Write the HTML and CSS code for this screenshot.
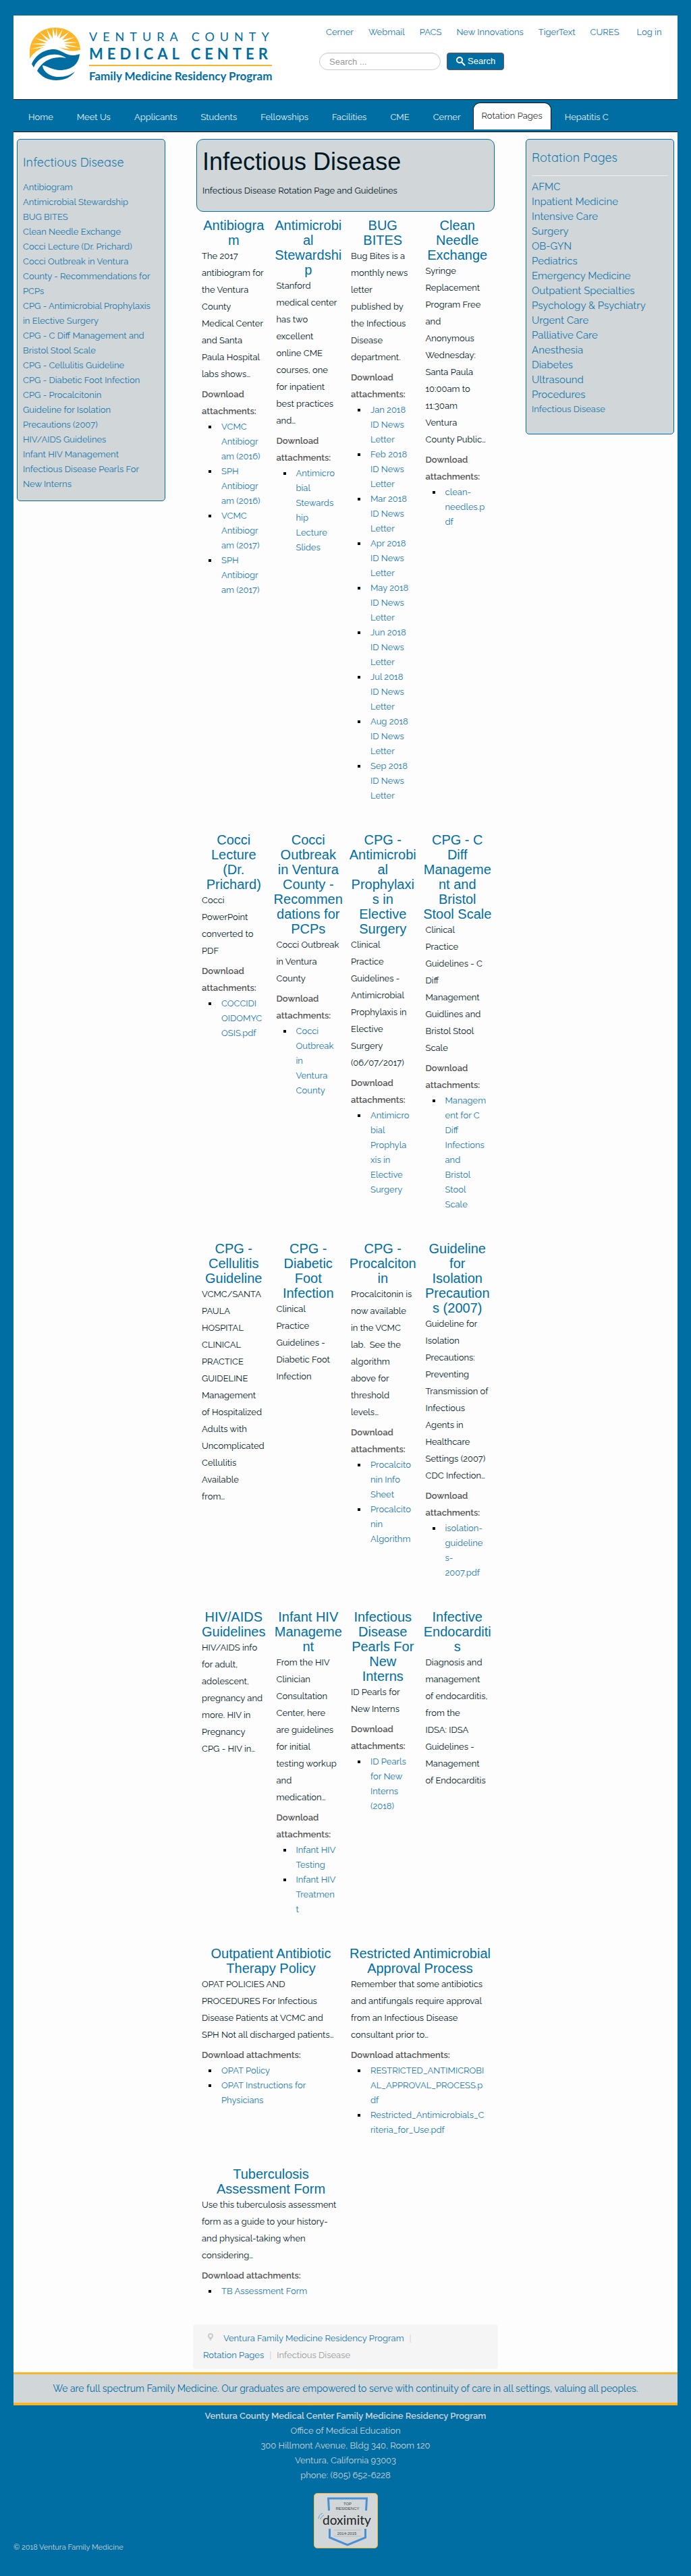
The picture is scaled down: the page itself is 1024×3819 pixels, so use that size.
FILE: index.html
```html
<!DOCTYPE html>
<html lang="en">
<head>
<meta charset="utf-8">
<meta name="viewport" content="width=device-width, initial-scale=1">
<title>Infectious Disease - Ventura Family Medicine</title>
<link rel="stylesheet" href="styles.css">
</head>
<body>
<div class="page">
  <header class="header">
    <a class="logo" href="#" aria-label="Ventura County Medical Center Family Medicine Residency Program">
      <svg class="logo-mark" width="76" height="80" viewBox="0 0 76 80" aria-hidden="true">
        <path fill="#fdb525" d="M0 47C-3 18 14 1 38 1C61 1 75 17 75 34C69 38 62 40 55 37C44 32 35 28 23 31C12 34 5 39 0 47Z"/>
        <path fill="#fff" d="M38 14L40 1L41 15L49 3L44 17L59 7L48 19L67 15L50 22L72 23L51 25L76 31L52 28L60 33L40 30L22 30L0 33L24 27L2 25L25 24L7 16L27 21L15 8L30 19L25 3L34 17L34 1Z"/>
        <path fill="#fff" d="M0 48C7 35 21 27 34 28C48 30 55 39 74 34V39C56 43 44 31 29 34C16 37 8 44 2 54Z"/>
        <path fill="#006ea3" d="M3 55C8 43 20 33 36 33C50 34 56 47 74 40C73 55 62 64 45 64C34 64 27 58 19 57C20 67 31 74 43 74C53 74 61 71 67 66C61 75 51 79 39 79C27 79 18 74 11 65C18 52 32 42 54 46C46 40 32 39 22 44C13 48 9 53 6 60Z"/>
      </svg>
      <svg class="logo-text" width="300" height="90" viewBox="0 0 300 90" aria-hidden="true">
        <g fill="#006ea3" font-family="Lato, sans-serif">
          <text x="0" y="21" font-size="18" letter-spacing="8">VENTURA COUNTY</text>
          <text x="0" y="48" font-size="22" font-weight="700" letter-spacing="6">MEDICAL CENTER</text>
          <text x="0" y="79" font-size="17" font-weight="700">Family Medicine Residency Program</text>
        </g>
        <path d="M0 57H271" stroke="#fdb525" stroke-width="2"/>
      </svg>
    </a>
    <div class="header-tools">
      <nav class="quick-links" aria-label="Quick links">
        <a href="#">Cerner</a><a href="#">Webmail</a><a href="#">PACS</a><a href="#">New Innovations</a><a href="#">TigerText</a><a href="#">CURES</a><a class="login" href="#">Log in</a>
      </nav>
      <form class="search">
        <input type="search" placeholder="Search ..." aria-label="Search">
        <button type="submit">
          <svg width="14" height="14" viewBox="0 0 14 14" aria-hidden="true"><circle cx="5" cy="5" r="4" fill="none" stroke="#fff" stroke-width="2"/><path d="M8 8L13 13" stroke="#fff" stroke-width="2"/></svg>
          Search
        </button>
      </form>
    </div>
  </header>

  <nav class="main-nav" aria-label="Main">
    <a href="#">Home</a><a href="#">Meet Us</a><a href="#">Applicants</a><a href="#">Students</a><a href="#">Fellowships</a><a href="#">Facilities</a><a href="#">CME</a><a href="#">Cerner</a><a class="active" href="#" aria-current="page">Rotation Pages</a><a href="#">Hepatitis C</a>
  </nav>

  <div class="columns">
    <aside class="panel topics">
      <h3>Infectious Disease</h3>
      <ul>
        <li><a href="#">Antibiogram</a></li>
        <li><a href="#">Antimicrobial Stewardship</a></li>
        <li><a href="#">BUG BITES</a></li>
        <li><a href="#">Clean Needle Exchange</a></li>
        <li><a href="#">Cocci Lecture (Dr. Prichard)</a></li>
        <li><a href="#">Cocci Outbreak in Ventura County - Recommendations for PCPs</a></li>
        <li><a href="#">CPG - Antimicrobial Prophylaxis in Elective Surgery</a></li>
        <li><a href="#">CPG - C Diff Management and Bristol Stool Scale</a></li>
        <li><a href="#">CPG - Cellulitis Guideline</a></li>
        <li><a href="#">CPG - Diabetic Foot Infection</a></li>
        <li><a href="#">CPG - Procalcitonin</a></li>
        <li><a href="#">Guideline for Isolation Precautions (2007)</a></li>
        <li><a href="#">HIV/AIDS Guidelines</a></li>
        <li><a href="#">Infant HIV Management</a></li>
        <li><a href="#">Infectious Disease Pearls For New Interns</a></li>
      </ul>
    </aside>

    <main class="content">
      <section class="intro">
        <h1>Infectious Disease</h1>
        <p>Infectious Disease Rotation Page and Guidelines</p>
      </section>

      <div class="articles">
        <article>
          <h2><a href="#">Antibiogram</a></h2>
          <p>The 2017 antibiogram for the Ventura County<br>Medical Center and Santa<br>Paula Hospital labs shows…</p>
          <h4>Download attachments:</h4>
          <ul>
            <li><a href="#">VCMC Antibiogr<wbr>am (2016)</a></li>
            <li><a href="#">SPH Antibiogr<wbr>am (2016)</a></li>
            <li><a href="#">VCMC Antibiogr<wbr>am (2017)</a></li>
            <li><a href="#">SPH Antibiogr<wbr>am (2017)</a></li>
          </ul>
        </article>
        <article>
          <h2><a href="#">Antimicrobial Stewardship</a></h2>
          <p>Stanford medical center has two excellent online CME courses, one for inpatient best practices and…</p>
          <h4>Download attachments:</h4>
          <ul>
            <li><a href="#">Antimicro<wbr>bial Stewards<wbr>hip<br>Lecture Slides</a></li>
          </ul>
        </article>
        <article>
          <h2><a href="#">BUG<br>BITES</a></h2>
          <p>Bug Bites is a monthly news letter published by the Infectious Disease department.</p>
          <h4>Download attachments:</h4>
          <ul>
            <li><a href="#">Jan 2018 ID News Letter</a></li>
            <li><a href="#">Feb 2018 ID News Letter</a></li>
            <li><a href="#">Mar 2018 ID News Letter</a></li>
            <li><a href="#">Apr 2018 ID News Letter</a></li>
            <li><a href="#">May 2018 ID News Letter</a></li>
            <li><a href="#">Jun 2018 ID News Letter</a></li>
            <li><a href="#">Jul 2018<br>ID News Letter</a></li>
            <li><a href="#">Aug 2018 ID News Letter</a></li>
            <li><a href="#">Sep 2018 ID News Letter</a></li>
          </ul>
        </article>
        <article>
          <h2><a href="#">Clean Needle Exchange</a></h2>
          <p>Syringe Replacement Program Free and<br>Anonymous Wednesday: Santa Paula 10:00am to 11:30am<br>Ventura<br>County Public…</p>
          <h4>Download attachments:</h4>
          <ul>
            <li><a href="#">clean-needles.p<wbr>df</a></li>
          </ul>
        </article>

        <article>
          <h2><a href="#">Cocci Lecture (Dr. Prichard)</a></h2>
          <p>Cocci PowerPoint converted to PDF</p>
          <h4>Download attachments:</h4>
          <ul>
            <li><a href="#">COCCIDI<wbr>OIDOMYC<wbr>OSIS.pdf</a></li>
          </ul>
        </article>
        <article>
          <h2><a href="#">Cocci Outbreak in Ventura County - Recommendations for PCPs</a></h2>
          <p>Cocci Outbreak in Ventura County</p>
          <h4>Download attachments:</h4>
          <ul>
            <li><a href="#">Cocci Outbreak in<br>Ventura County</a></li>
          </ul>
        </article>
        <article>
          <h2><a href="#">CPG - Antimicrobial Prophylaxis in Elective Surgery</a></h2>
          <p>Clinical Practice Guidelines - Antimicrobial Prophylaxis in Elective Surgery (06/07/2017)</p>
          <h4>Download attachments:</h4>
          <ul>
            <li><a href="#">Antimicro<wbr>bial Prophyla<wbr>xis in Elective Surgery</a></li>
          </ul>
        </article>
        <article>
          <h2><a href="#">CPG - C Diff Management and Bristol Stool Scale</a></h2>
          <p>Clinical Practice Guidelines - C Diff Management Guidlines and Bristol Stool Scale</p>
          <h4>Download attachments:</h4>
          <ul>
            <li><a href="#">Managem<wbr>ent for C<br>Diff Infections and<br>Bristol Stool<br>Scale</a></li>
          </ul>
        </article>

        <article>
          <h2><a href="#">CPG - Cellulitis Guideline</a></h2>
          <p>VCMC/SANTA PAULA HOSPITAL CLINICAL PRACTICE GUIDELINE Management of Hospitalized Adults with Uncomplicated Cellulitis Available<br>from…</p>
        </article>
        <article>
          <h2><a href="#">CPG - Diabetic Foot Infection</a></h2>
          <p>Clinical Practice Guidelines - Diabetic Foot Infection</p>
        </article>
        <article>
          <h2><a href="#">CPG - Procalcitonin</a></h2>
          <p>Procalcitonin is now available in the VCMC lab.&nbsp; See the algorithm above for threshold levels…</p>
          <h4>Download attachments:</h4>
          <ul>
            <li><a href="#">Procalcito<wbr>nin Info Sheet</a></li>
            <li><a href="#">Procalcito<wbr>nin Algorithm</a></li>
          </ul>
        </article>
        <article>
          <h2><a href="#">Guideline for Isolation Precautions (2007)</a></h2>
          <p>Guideline for Isolation Precautions: Preventing Transmission of Infectious Agents in Healthcare Settings (2007) CDC Infection…</p>
          <h4>Download attachments:</h4>
          <ul>
            <li><a href="#">isolation-guideline<wbr>s-<wbr>2007.pdf</a></li>
          </ul>
        </article>

        <article>
          <h2><a href="#">HIV/AIDS Guidelines</a></h2>
          <p>HIV/AIDS info for adult, adolescent, pregnancy and more. HIV in Pregnancy<br>CPG - HIV in…</p>
        </article>
        <article>
          <h2><a href="#">Infant HIV Management</a></h2>
          <p>From the HIV Clinician Consultation Center, here are guidelines for initial<br>testing workup and<br>medication…</p>
          <h4>Download attachments:</h4>
          <ul>
            <li><a href="#">Infant HIV Testing</a></li>
            <li><a href="#">Infant HIV Treatmen<wbr>t</a></li>
          </ul>
        </article>
        <article>
          <h2><a href="#">Infectious Disease Pearls For New Interns</a></h2>
          <p>ID Pearls for New Interns</p>
          <h4>Download attachments:</h4>
          <ul>
            <li><a href="#">ID Pearls for New Interns (2018)</a></li>
          </ul>
        </article>
        <article>
          <h2><a href="#">Infective Endocarditis</a></h2>
          <p>Diagnosis and management of endocarditis, from the<br>IDSA: IDSA Guidelines - Management of Endocarditis</p>
        </article>

        <article class="wide">
          <h2><a href="#">Outpatient Antibiotic Therapy Policy</a></h2>
          <p>OPAT POLICIES AND PROCEDURES For Infectious Disease Patients at VCMC and SPH Not all discharged patients…</p>
          <h4>Download attachments:</h4>
          <ul>
            <li><a href="#">OPAT Policy</a></li>
            <li><a href="#">OPAT Instructions for Physicians</a></li>
          </ul>
        </article>
        <article class="wide">
          <h2><a href="#">Restricted Antimicrobial Approval Process</a></h2>
          <p>Remember that some antibiotics and antifungals require approval from an Infectious Disease consultant prior to…</p>
          <h4>Download attachments:</h4>
          <ul>
            <li><a href="#">RESTRICTED_ANTIMICROBI<wbr>AL_APPROVAL_PROCESS.p<wbr>df</a></li>
            <li><a href="#">Restricted_Antimicrobials_C<wbr>riteria_for_Use.pdf</a></li>
          </ul>
        </article>

        <article class="wide">
          <h2><a href="#">Tuberculosis Assessment Form</a></h2>
          <p>Use this tuberculosis assessment form as a guide to your history- and physical-taking when considering…</p>
          <h4>Download attachments:</h4>
          <ul>
            <li><a href="#">TB Assessment Form</a></li>
          </ul>
        </article>
      </div>

      <nav aria-label="Breadcrumb">
        <ol class="breadcrumb">
          <li class="pin"><svg width="10" height="12" viewBox="0 0 10 12" aria-hidden="true"><path fill="#ccc" fill-rule="evenodd" d="M5 0a4 4 0 0 1 4 4c0 3-3 4-4 8C4 8 1 7 1 4a4 4 0 0 1 4-4zm0 2a2 2 0 1 0 0 4a2 2 0 0 0 0-4z"/></svg></li>
          <li><a href="#">Ventura Family Medicine Residency Program</a><span class="divider">|</span></li>
          <li><a href="#">Rotation Pages</a><span class="divider">|</span></li>
          <li class="current">Infectious Disease</li>
        </ol>
      </nav>
    </main>

    <aside class="panel rotations">
      <h3>Rotation Pages</h3>
      <ul>
        <li><a href="#">AFMC</a></li>
        <li><a href="#">Inpatient Medicine</a></li>
        <li><a href="#">Intensive Care</a></li>
        <li><a href="#">Surgery</a></li>
        <li><a href="#">OB-GYN</a></li>
        <li><a href="#">Pediatrics</a></li>
        <li><a href="#">Emergency Medicine</a></li>
        <li><a href="#">Outpatient Specialties</a></li>
        <li><a href="#">Psychology &amp; Psychiatry</a></li>
        <li><a href="#">Urgent Care</a></li>
        <li><a href="#">Palliative Care</a></li>
        <li><a href="#">Anesthesia</a></li>
        <li><a href="#">Diabetes</a></li>
        <li><a href="#">Ultrasound</a></li>
        <li><a href="#">Procedures</a></li>
        <li class="current"><a href="#">Infectious Disease</a></li>
      </ul>
    </aside>
  </div>

  <p class="motto">We are full spectrum Family Medicine. Our graduates are empowered to serve with continuity of care in all settings, valuing all peoples.</p>

  <footer class="footer">
    <address>
      <strong>Ventura County Medical Center Family Medicine Residency Program</strong><br>
      Office of Medical Education<br>
      300 Hillmont Avenue, Bldg 340, Room 120<br>
      Ventura, California 93003<br>
      phone: (805) 652-6228
    </address>
    <div class="footer-bottom">
      <p class="copyright">© 2018 Ventura Family Medicine</p>
      <a class="badge" href="#" aria-label="Doximity top residency">
        <svg width="93" height="80" viewBox="0 0 93 80" aria-hidden="true">
          <g fill="none" stroke="#4b8fd3" stroke-width="3">
            <path d="M21.500 25L20.500 7H77.500L76.500 25"/>
            <path d="M22.500 52V65L49 76L75.500 65V52"/>
          </g>
          <g fill="none" stroke="#5a9ad8"><path d="M6 37C7 32 9 30 12 29M9 38C10 35 11 33 14 32"/></g>
          <path d="M29 54H69M29 63H69" stroke="#b8bdc0"/>
          <g font-family="'Liberation Sans', sans-serif" text-anchor="middle" fill="#444">
            <text x="49" y="17" font-size="6">TOP</text>
            <text x="49" y="24" font-size="6">RESIDENCY</text>
            <text x="48" y="61" font-size="6">2014-2015</text>
          </g>
          <text x="48" y="46" font-family="Lato, sans-serif" font-size="19" text-anchor="middle" fill="#222">doximity</text>
        </svg>
      </a>
    </div>
  </footer>
</div>
</body>
</html>
```
FILE: styles.css
```css
* { box-sizing: border-box; }

body {
  margin: 0;
  padding: 23px 20px 34px;
  background: #006ea3;
  color: #001824;
  font: 13px/22px Raleway, "Open Sans", sans-serif;
}

a { color: #1978aa; text-decoration: none; }
ul, ol { margin: 0; padding: 0; list-style: none; }
h1, h2, h3, h4, p { margin: 0; font-weight: 400; }

/* Header */
.header {
  display: flex;
  align-items: flex-start;
  height: 124px;
  padding: 0 24px;
  background: #fff;
}
.logo { display: flex; flex: none; gap: 12px; padding-top: 17px; }
.header-tools { flex: 1; padding: 14px 0 0 41px; }
.quick-links { display: flex; gap: 22px; padding-left: 10px; white-space: nowrap; }
.quick-links .login { margin-left: 4px; }
.search { display: flex; gap: 9px; padding-top: 19px; }
.search input, .search button {
  height: 26px;
  font: 13px/18px "Liberation Sans", Arial, sans-serif;
}
.search input {
  width: 180px;
  padding: 0 14px;
  border: 1px solid #ccc;
  border-radius: 15px;
  background: #fff;
  box-shadow: inset 0 1px 1px rgba(0, 0, 0, .08);
}
.search input::placeholder { color: #999; }
.search button {
  display: flex;
  align-items: center;
  gap: 3px;
  padding: 0 12px 0 13px;
  border: 1px solid #7d4a58;
  border-radius: 4px;
  background: #006ea3;
  color: #fff;
}

/* Main navigation */
.main-nav {
  display: flex;
  align-items: flex-start;
  gap: 1px;
  height: 49px;
  padding: 4px 5px 0;
  border: solid #001018;
  border-width: 1px 0;
  white-space: nowrap;
}
.main-nav a { padding: 11px 17px; color: #e4f0f6; }
.main-nav .active {
  margin: 0 2px 0 0;
  padding: 8px 12px 9px;
  border: 1px solid #001018;
  border-bottom: 0;
  border-radius: 10px 10px 0 0;
  background: #fff;
  color: #333;
}

/* Three columns */
.columns {
  display: grid;
  grid-template-columns: 220fr 442fr 220fr;
  align-items: start;
  gap: 46px;
  padding: 10px 5px 5px;
  background: #fdfdfd;
}
.panel {
  padding: 0 8px 13px;
  border: 1px solid #006ea3;
  border-radius: 5px;
  background: #d1d6d9;
}
.panel h3 { font: 18px/22px Quicksand, Raleway, sans-serif; color: #1978aa; }
.topics h3 { padding: 23px 0 15px; }
.rotations { padding-bottom: 25px; }
.rotations h3 {
  margin-bottom: 5px;
  padding: 16px 0 15px;
  border-bottom: 1px solid #eee;
}
.rotations li { font-size: 15px; }
.rotations .current { font-size: 13px; }

.intro {
  padding: 13px 8px 18px;
  border: 1px solid #006ea3;
  border-radius: 10px;
  background: #d1d6d9;
}
.intro h1 { font: 36px/40px "Liberation Sans", Arial, sans-serif; }
.intro p { padding-top: 10px; line-height: 25px; }

/* Article grid */
.articles {
  display: grid;
  grid-template-columns: repeat(4, minmax(0, 1fr));
  row-gap: 43px;
  padding-top: 9px;
  overflow-wrap: anywhere;
}
.articles article { padding: 0 4px; }
.articles .wide { grid-column: span 2; }
.articles h2 {
  font: 20px/22px "Liberation Sans", Arial, sans-serif;
  text-align: center;
}
.articles h2 a { color: #006ea3; }
.articles p, .articles h4 { padding: 0 4px; line-height: 25px; }
.articles h4 { margin-top: 5px; font-size: 13px; font-weight: 600; color: #555; }
.articles ul { padding: 0 8px 0 14px; }
.articles li { display: flex; }
.articles li::before {
  content: "";
  flex: none;
  width: 4px;
  height: 4px;
  margin: 9px 15px 0 0;
  background: #001018;
}

.breadcrumb {
  display: flex;
  flex-wrap: wrap;
  margin: 38px -5px 0;
  padding: 8px 15px;
  border-radius: 4px;
  background: #f5f5f5;
  line-height: 25px;
}
.breadcrumb .pin { padding: 0 14px 0 6px; }
.breadcrumb .divider { padding: 0 8px; color: #ccc; }
.breadcrumb .current { color: #999; }

/* Footer */
.motto {
  padding: 10px 0;
  border: solid #fdb525;
  border-width: 3px 0 4px;
  background: #d1d6d9;
  color: #006ea3;
  font-size: 14px;
  text-align: center;
}
.footer { padding-top: 5px; color: #ccd3d8; }
.footer address { font-style: normal; text-align: center; }
.footer address strong { font-weight: 600; }
.footer-bottom {
  display: grid;
  grid-template-columns: 1fr auto 1fr;
  align-items: end;
  padding-top: 15px;
}
.copyright { font-size: 11px; line-height: 16px; }
.badge {
  display: flex;
  margin-bottom: 7px;
  border: 1px solid #fdb525;
  border-radius: 5px;
  background: #d1d6d9;
}
```
